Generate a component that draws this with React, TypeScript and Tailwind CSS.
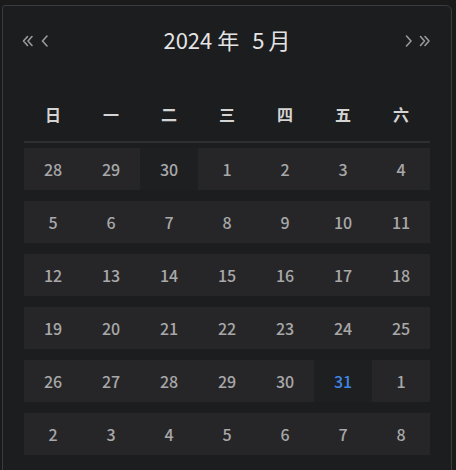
import React from "react";

const weeks: { d: number; dim?: boolean; dark?: boolean; today?: boolean }[][] = [
  [{ d: 28 }, { d: 29 }, { d: 30, dark: true }, { d: 1 }, { d: 2 }, { d: 3 }, { d: 4 }],
  [{ d: 5 }, { d: 6 }, { d: 7 }, { d: 8 }, { d: 9 }, { d: 10 }, { d: 11 }],
  [{ d: 12 }, { d: 13 }, { d: 14 }, { d: 15 }, { d: 16 }, { d: 17 }, { d: 18 }],
  [{ d: 19 }, { d: 20 }, { d: 21 }, { d: 22 }, { d: 23 }, { d: 24 }, { d: 25 }],
  [{ d: 26 }, { d: 27 }, { d: 28 }, { d: 29 }, { d: 30 }, { d: 31, dark: true, today: true }, { d: 1 }],
  [{ d: 2 }, { d: 3 }, { d: 4 }, { d: 5 }, { d: 6 }, { d: 7 }, { d: 8 }],
];

const days = ["日", "一", "二", "三", "四", "五", "六"];

function Chev({ dir, double }: { dir: "l" | "r"; double?: boolean }) {
  const single = dir === "l" ? "M6 1 L1.5 6 L6 11" : "M1.5 1 L6 6 L1.5 11";
  if (!double) {
    return (
      <svg width="8" height="12" viewBox="0 0 8 12" fill="none">
        <path d={single} stroke="#9a9a9b" strokeWidth="1.6" strokeLinecap="round" strokeLinejoin="round" />
      </svg>
    );
  }
  const d =
    dir === "l"
      ? "M5.5 1.5 L1.5 6 L5.5 10.5 M10 1.5 L6 6 L10 10.5"
      : "M1.5 1.5 L5.5 6 L1.5 10.5 M6 1.5 L10 6 L6 10.5";
  return (
    <svg width="12" height="12" viewBox="0 0 12 12" fill="none">
      <path d={d} stroke="#9a9a9b" strokeWidth="1.6" strokeLinecap="round" strokeLinejoin="round" />
    </svg>
  );
}

export default function App() {
  return (
    <div
      className="w-[456px] h-[470px] overflow-hidden bg-[#1a1a1b] pl-[2px] pt-[5px]"
      style={{ fontFamily: '"Noto Sans CJK SC", "Noto Sans", sans-serif' }}
    >
      <div className="w-[450px] h-[480px] bg-[#1c1d1f] border border-[#3a3b3d] rounded-tr-[6px] rounded-tl-[3px] px-[21px]">
        <div className="h-[70px] flex items-center justify-between">
          <div className="flex items-center gap-[7px] -ml-[2px]">
            <Chev dir="l" double />
            <Chev dir="l" />
          </div>
          <div className="text-[22px] font-normal text-[#e4e4e4] flex items-center -mt-[3px]">
            <span>2024</span>
            <span className="ml-[5px]">年</span>
            <span className="ml-[13px]">5</span>
            <span className="ml-[4px]">月</span>
          </div>
          <div className="flex items-center gap-[6px] -mr-[1px]">
            <Chev dir="r" />
            <Chev dir="r" double />
          </div>
        </div>
        <div className="mt-[18px] h-[40px] flex">
          {days.map((d) => (
            <div key={d} className="w-[58px] flex items-center justify-center text-[16px] font-bold text-[#d4d4d4]">
              {d}
            </div>
          ))}
        </div>
        <div className="mt-[7px] h-[2px] bg-[#2e2f31]" />
        <div className="mt-[5px] flex flex-col gap-[11px]">
          {weeks.map((w, i) => (
            <div key={i} className="flex h-[42px]">
              {w.map((c, j) => (
                <div
                  key={j}
                  className={`w-[58px] flex items-center justify-center text-[16px] font-medium ${
                    c.dark ? "bg-[#1e1f21]" : "bg-[#262628]"
                  } ${c.today ? "text-[#3f86e4]" : "text-[#a8a8a9]"}`}
                >
                  {c.d}
                </div>
              ))}
            </div>
          ))}
        </div>
      </div>
    </div>
  );
}
